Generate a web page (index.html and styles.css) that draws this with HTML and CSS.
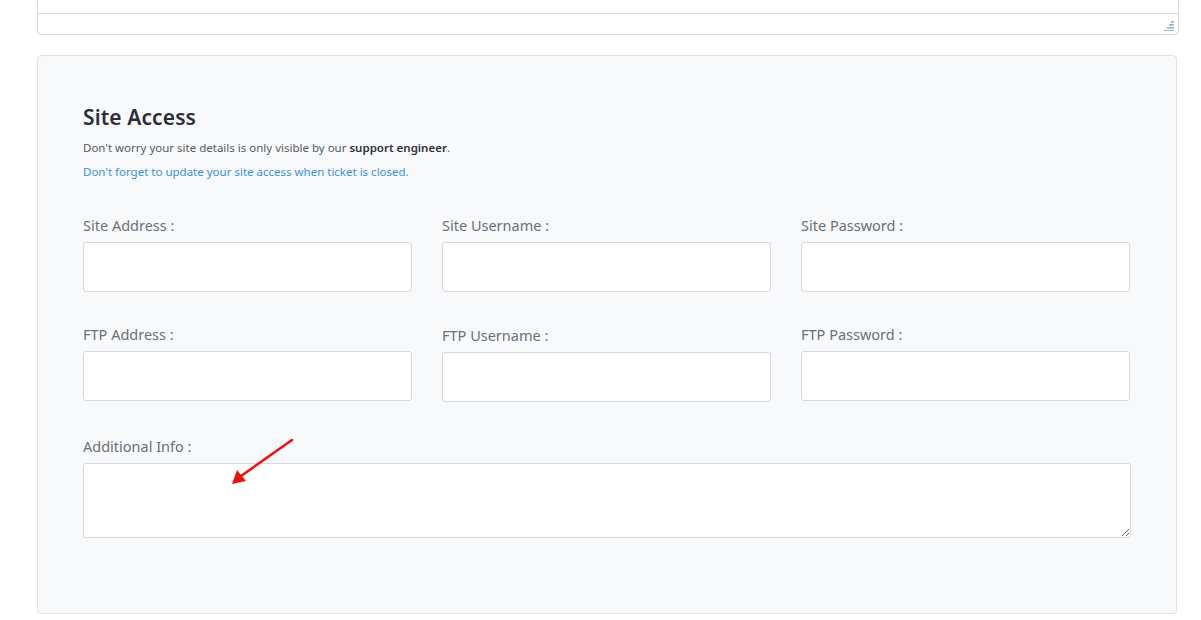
FILE: index.html
```html
<!DOCTYPE html>
<html lang="en">
<head>
    <meta charset="UTF-8">
    <meta name="viewport" content="width=device-width, initial-scale=1.0">
    <title>Support Ticket - Site Access</title>
    <link rel="stylesheet" href="styles.css">
</head>
<body>
    <div class="editor">
        <div class="editor-area"></div>
        <div class="editor-status">
            <svg class="grip" width="10" height="10" viewBox="0 0 10 10">
                <g fill="#8ab8e0">
                    <rect x="7" y="0" width="3" height="1"/>
                    <rect x="5" y="3" width="5" height="1"/>
                    <rect x="3" y="6" width="7" height="1"/>
                    <rect x="0" y="9" width="10" height="1"/>
                </g>
                <g fill="#c9c9c9">
                    <rect x="7" y="1" width="3" height="1"/>
                    <rect x="5" y="4" width="5" height="1"/>
                    <rect x="3" y="7" width="7" height="1"/>
                </g>
            </svg>
        </div>
    </div>

    <div class="card">
        <h2 class="card-title">Site Access</h2>
        <p class="note">Don't worry your site details is only visible by our <b>support engineer</b>.</p>
        <p class="note note-blue">Don't forget to update your site access when ticket is closed.</p>

        <div class="form-grid">
            <div class="field">
                <label>Site Address :</label>
                <input type="text">
            </div>
            <div class="field">
                <label>Site Username :</label>
                <input type="text">
            </div>
            <div class="field">
                <label>Site Password :</label>
                <input type="password">
            </div>

            <div class="field">
                <label>FTP Address :</label>
                <input type="text">
            </div>
            <div class="field field-shift">
                <label>FTP Username :</label>
                <input type="text">
            </div>
            <div class="field">
                <label>FTP Password :</label>
                <input type="password">
            </div>
        </div>

        <div class="field field-wide">
            <label>Additional Info :</label>
            <textarea></textarea>
            <!-- annotation arrow -->
            <svg class="arrow" width="70" height="54" viewBox="0 0 70 54">
                <line x1="67" y1="2" x2="16" y2="38" stroke="#f20d0d" stroke-width="2.5" stroke-linecap="round"/>
                <polygon points="7,46 12,32 21,43" fill="#f20d0d"/>
            </svg>
        </div>
    </div>
</body>
</html>
```

FILE: styles.css
```css
body {
    margin: 0;
    padding: 0 24px 0 37px;
    font-family: "Noto Sans", Arial, sans-serif;
    background-color: #ffffff;
    color: #343a40;
}

.editor {
    width: 1140px;
    margin-top: -19px;
    border: 1px solid #dcdcdc;
    border-top: none;
    border-radius: 0 0 4px 4px;
    background: #fff;
}

.editor-area {
    height: 32px;
    border-bottom: 1px solid #dcdcdc;
}

.editor-status {
    height: 20px;
    display: flex;
    justify-content: flex-end;
    align-items: flex-end;
    padding: 0 4px 3px 0;
    box-sizing: border-box;
}

.card {
    position: relative;
    width: 1140px;
    box-sizing: border-box;
    margin-top: 20px;
    padding: 46px 46px 75px 45px;
    background-color: #f8f9fb;
    border: 1px solid #e0e2e5;
    border-radius: 4px;
}

.card-title {
    margin: 0 0 8px 0;
    font-size: 21px;
    font-weight: 600;
    line-height: 30px;
    color: #2b3038;
    letter-spacing: 0.1px;
}

.note {
    margin: 0 0 9px 0;
    font-size: 11.5px;
    line-height: 15px;
    color: #555a60;
}

.note b {
    color: #2b3038;
    font-weight: 600;
}

.note-blue {
    color: #3a90dc;
    margin-bottom: 0;
}

.form-grid {
    display: grid;
    grid-template-columns: repeat(3, 329px);
    column-gap: 30px;
    row-gap: 32px;
    margin-top: 36px;
}

.field label {
    display: block;
    font-size: 14.5px;
    line-height: 20px;
    color: #6a7077;
    margin-bottom: 7px;
}

.field input,
.field textarea {
    display: block;
    width: 100%;
    height: 50px;
    box-sizing: border-box;
    border: 1px solid #d5d8dc;
    border-radius: 3px;
    background: #fff;
    margin: 0;
}

.field-shift {
    margin-top: 1px;
}

.field-shift input {
    margin-top: 2px;
}

.field-wide {
    position: relative;
    margin-top: 34px;
    width: 1048px;
}

.field-wide textarea {
    height: 75px;
    resize: vertical;
}

.arrow {
    position: absolute;
    left: 142px;
    top: 2px;
}
```
